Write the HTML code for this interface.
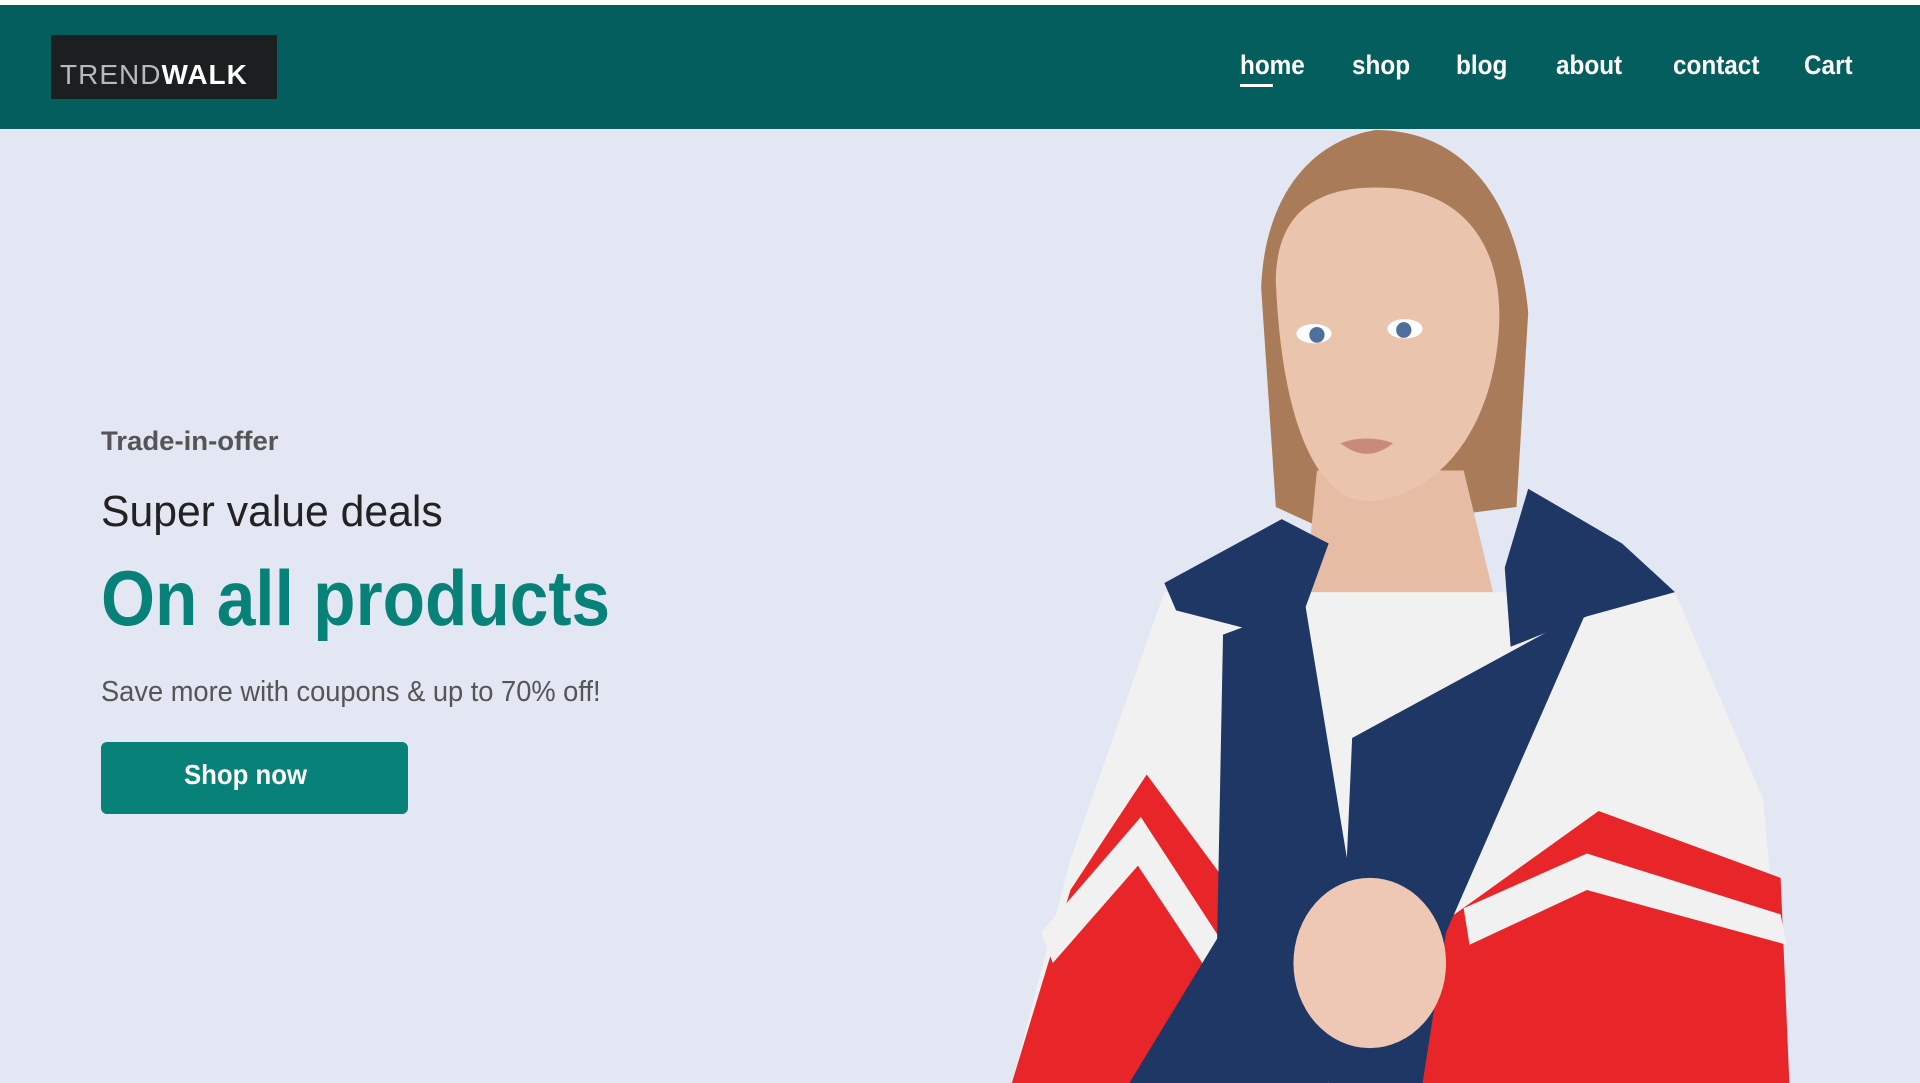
<!DOCTYPE html>
<html><head><meta charset="utf-8"><style>
*{margin:0;padding:0;box-sizing:border-box}
body{width:1920px;height:1083px;overflow:hidden;background:#e3e6f3;font-family:"Liberation Sans",sans-serif;position:relative}
.top{position:absolute;left:0;top:0;width:1920px;height:5px;background:#fff}
header{position:absolute;left:0;top:5px;width:1920px;height:124px;background:#055e5e}
.logo{position:absolute;left:51px;top:30px;width:226px;height:64px;background:#1c1f1f;color:#fff;font-size:28px;line-height:80px;padding-left:9px;letter-spacing:1px;overflow:hidden}
.logo span{color:#b9b9b9;font-weight:normal}
.logo b{font-weight:bold}
nav a{position:absolute;top:45px;color:#fff;font-size:27px;text-decoration:none;font-weight:bold;transform:scaleX(.9);transform-origin:left}
.ul{position:absolute;left:1240px;top:79px;width:33px;height:3px;background:#fff}
.t{position:absolute;left:101px;white-space:nowrap;transform-origin:left}
.btn{position:absolute;left:101px;top:742px;width:307px;height:72px;background:#088178;border-radius:6px;color:#fff;font-weight:bold;font-size:28px;line-height:66px;padding-left:83px}
.btn span{display:inline-block;transform:scaleX(.92);transform-origin:left}
</style></head><body>
<div class="top"></div>
<header>
<div class="logo"><span>TREND</span><b>WALK</b></div>
<nav>
<a style="left:1240px">home</a>
<a style="left:1352px">shop</a>
<a style="left:1456px">blog</a>
<a style="left:1556px">about</a>
<a style="left:1673px">contact</a>
<a style="left:1804px">Cart</a>
</nav>
<div class="ul"></div>
</header>
<div class="t" style="top:426px;font-size:27px;font-weight:bold;color:#555;transform:scaleX(1.02)">Trade-in-offer</div>
<div class="t" style="top:487px;font-size:44px;color:#222;transform:scaleX(.97)">Super value deals</div>
<div class="t" style="top:553px;font-size:78px;font-weight:bold;color:#088178;transform:scaleX(.89)">On all products</div>
<div class="t" style="top:676px;font-size:29px;color:#555;transform:scaleX(.94)">Save more with coupons &amp; up to 70% off!</div>
<div class="btn"><span>Shop now</span></div>
<svg style="position:absolute;left:0;top:0" width="1920" height="1083" viewBox="0 0 1920 1083">
<g transform="translate(1000,130) scale(0.5869,0.608)">
<path d="M640 0 C520 20 450 120 445 260 L470 620 L560 660 L880 620 L900 300 C880 100 780 0 640 0 Z" fill="#a97b58"/>
<path d="M540 560 L790 560 L840 760 L600 1000 L520 760 Z" fill="#e6bca4"/>
<path d="M470 250 C470 120 560 90 660 95 C780 100 860 180 850 330 C840 470 770 590 640 610 C540 620 480 480 470 250 Z" fill="#ebc4ad"/>
<ellipse cx="535" cy="335" rx="30" ry="16" fill="#fff"/><circle cx="540" cy="337" r="13" fill="#4f6f9c"/>
<ellipse cx="690" cy="327" rx="30" ry="16" fill="#fff"/><circle cx="688" cy="329" r="13" fill="#4f6f9c"/>
<path d="M580 515 Q625 500 670 515 Q625 550 580 515Z" fill="#c98a7e"/>
<path d="M555 1010 L670 1000 L600 1220 L560 1220 Z" fill="#fafafa"/>
<path d="M280 760 L1150 760 L1300 1100 L1345 1568 L20 1568 L120 1200 Z" fill="#f2f1f1"/>
<path d="M20 1568 L120 1250 L250 1060 L380 1230 L370 1568 Z" fill="#e8262a"/>
<path d="M70 1320 L240 1130 L375 1330 L372 1410 L235 1210 L90 1370 Z" fill="#f2f1f1"/>
<path d="M760 1300 L1020 1120 L1330 1230 L1345 1568 L700 1568 Z" fill="#e8262a"/>
<path d="M790 1280 L1000 1190 L1330 1290 L1340 1340 L1000 1250 L800 1340 Z" fill="#f2f1f1"/>
<path d="M380 830 L520 780 L600 1250 L560 1568 L220 1568 L370 1330 Z" fill="#1f3765"/>
<path d="M600 1000 L1000 790 L760 1320 L720 1568 L560 1568 L590 1220 Z" fill="#1f3765"/>
<path d="M280 745 L480 640 L560 680 L500 840 L300 790 Z" fill="#1f3765"/>
<path d="M860 720 L900 590 L1060 680 L1150 760 L1000 800 L870 850 Z" fill="#1f3765"/>
<ellipse cx="630" cy="1370" rx="130" ry="140" fill="#eec8b4"/>
</g>
</svg>
</body></html>
